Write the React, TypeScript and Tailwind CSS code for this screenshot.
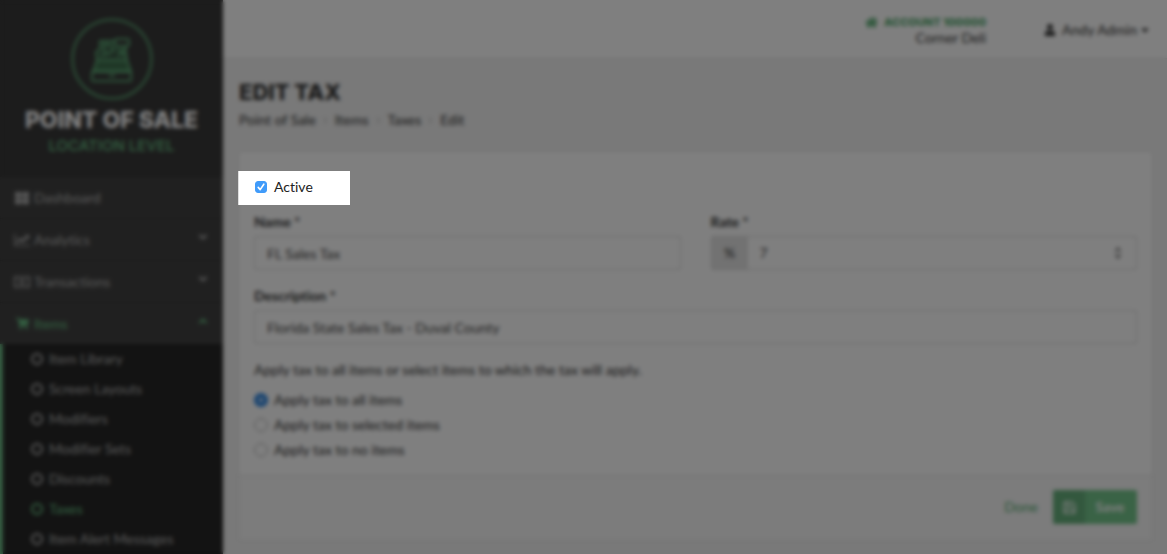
import clsx from 'clsx';
import { ChevronDown, ChevronRight, ChevronUp, Save } from 'lucide-react';
import { useState } from 'react';
import {
  FaCaretDown,
  FaHome,
  FaShoppingCart,
  FaThLarge,
  FaUser,
} from 'react-icons/fa';

const ChartIcon = () => (
  <svg viewBox="0 0 16 14" className="w-4 h-[14px]" fill="none" stroke="currentColor">
    <path d="M.8 1v11.500H16" strokeWidth="1.2" />
    <path d="M3 9.500l3.500-3.500 2.500 2.300L13.500 3.500" strokeWidth="2" />
    <path d="M10.500 2H15v4.500z" fill="currentColor" stroke="none" />
  </svg>
);

const MoneyIcon = () => (
  <svg viewBox="0 0 16 12" className="w-4 h-3" fill="none" stroke="currentColor">
    <rect x=".6" y="1" width="14.800" height="10" strokeWidth="1.200" />
    <ellipse cx="8" cy="6" rx="2.500" ry="3.200" />
    <path d="M1 3.500q2 0 2-2M15 3.500q-2 0-2-2M1 8.500q2 0 2 2M15 8.500q-2 0-2 2" strokeWidth=".7" />
    <path d="M8 4v4" />
  </svg>
);

const CircleIcon = () => (
  <svg viewBox="0 0 14 14" className="w-[14px] h-[14px]" fill="none" stroke="currentColor">
    <circle cx="7" cy="7" r="5" strokeWidth="2" />
  </svg>
);

const NAV_ITEMS = [
  { name: 'Dashboard', icon: <FaThLarge />, expandable: false },
  { name: 'Analytics', icon: <ChartIcon />, expandable: true },
  { name: 'Transactions', icon: <MoneyIcon />, expandable: true },
  { name: 'Items', icon: <FaShoppingCart className="text-[13px]" />, expandable: true, isOpen: true },
];

const SUB_ITEMS = [
  'Item Library',
  'Screen Layouts',
  'Modifiers',
  'Modifier Sets',
  'Discounts',
  'Taxes',
  'Item Alert Messages',
];

const APPLY_OPTIONS = [
  { value: 'all', label: 'Apply tax to all items' },
  { value: 'selected', label: 'Apply tax to selected items' },
  { value: 'none', label: 'Apply tax to no items' },
];

const RegisterLogo = () => (
  <svg
    className="w-[82px] h-[82px]"
    viewBox="0 0 82 82"
    fill="none"
    stroke="#5fae78"
    strokeWidth="2"
    strokeLinejoin="round"
  >
    <circle cx="41" cy="41" r="39.500" />
    <path d="M26 42h30l4 12H22z" fill="#3f6f4e" />
    <rect x="21" y="53" width="39" height="10" rx="2" />
    <path d="M38 57q3 2 6 0" />
    <path d="M26 42l-1-8 4-3v-8h15l3 4h7l2 15z" fill="#3b5544" />
    <rect x="44" y="21" width="14" height="7" rx="2" fill="#383838" />
    <path d="M33 26v7l4 3 6-4-4-5zM47 31l7 7M54 31l-7 7M29 37h6" />
  </svg>
);

const Sidebar = () => (
  <aside className="w-[223px] shrink-0 bg-[#383838] text-[#b4b4b4]">
    <div className="flex flex-col items-center h-[176px] pt-[18px] font-['Inter',sans-serif]">
      <RegisterLogo />
      <div className="mt-[6px] text-[23px] leading-7 font-extrabold text-white">
        POINT OF SALE
      </div>
      <div className="mt-[2px] text-[15px] leading-5 font-medium text-[#68c084]">
        LOCATION LEVEL
      </div>
    </div>
    <nav>
      {NAV_ITEMS.map((item) => (
        <a
          key={item.name}
          href="#"
          className={clsx(
            'flex items-center h-[42px] px-[14px] border-t border-[#363636] bg-[#414141]',
            item.isOpen && 'text-[#68c084]'
          )}
        >
          <span className="w-4 mr-1 flex justify-center">{item.icon}</span>
          <span>{item.name}</span>
          {item.expandable && (
            <span className="ml-auto mb-[6px]">
              {item.isOpen ? (
                <ChevronUp size={12} strokeWidth={4} />
              ) : (
                <ChevronDown size={12} strokeWidth={4} />
              )}
            </span>
          )}
        </a>
      ))}
      <ul className="border-l-3 border-[#6dbd86] bg-[#262626]">
        {SUB_ITEMS.map((name) => (
          <li key={name}>
            <a
              href="#"
              className={clsx(
                'flex items-center gap-[5px] h-[30px] pl-[27px]',
                name === 'Taxes' && 'text-[#68c084]'
              )}
            >
              <CircleIcon />
              {name}
            </a>
          </li>
        ))}
      </ul>
    </nav>
  </aside>
);

const Header = () => (
  <header className="flex justify-end items-center h-[59px] pt-[2px] pr-4 bg-white border-b border-[#e4e4e4]">
    <div className="flex flex-col items-end leading-4">
      <div className="flex items-center gap-[6px] text-[11px] font-extrabold text-[#50a86c] font-['Inter',sans-serif]">
        <FaHome className="text-[13px]" />
        ACCOUNT 100000
      </div>
      <div>Corner Deli</div>
    </div>
    <button type="button" className="flex items-center ml-[58px] gap-[6px]">
      <FaUser className="text-[12px]" />
      <span className="flex items-center gap-[2px]">
        Andy Admin
        <FaCaretDown className="text-[12px]" />
      </span>
    </button>
  </header>
);

const INPUT_CLASS =
  'w-full h-[34px] px-3 bg-white border border-[#d6d6d6] rounded-[2px] text-[#444]';

const TaxForm = () => {
  const [active, setActive] = useState(true);
  const [applyTo, setApplyTo] = useState('all');

  return (
    <form className="mt-[21px] bg-white border border-[#e6e6e6] rounded-[2px]">
      <div className="px-[15px] pt-[19px] pb-[13px]">
        {/* raised above the dimmed backdrop */}
        <label className="relative z-20 flex items-center gap-[7px] w-28 h-[34px] -ml-4 pl-4 pb-[2px] bg-white border-l border-[#ddd] text-[#222]">
          <span className="grid w-3 h-3">
            <input
              type="checkbox"
              checked={active}
              onChange={(e) => setActive(e.target.checked)}
              className="[grid-area:1/1] appearance-none w-3 h-3 rounded-[3px] border border-[#bbb] checked:border-[#409bfa] checked:bg-[#409bfa]"
            />
            {active && (
              <svg
                viewBox="0 0 12 12"
                className="[grid-area:1/1] z-10 w-3 h-3 pointer-events-none"
                fill="none"
                stroke="white"
                strokeWidth="1.6"
                strokeLinecap="round"
                strokeLinejoin="round"
              >
                <path d="M3.200 6.400l2 2.200 3.600-5.400" />
              </svg>
            )}
          </span>
          Active
        </label>

        <div className="mt-[7px] grid grid-cols-2 gap-[30px]">
          <div>
            <label htmlFor="name" className="block mb-1 font-bold">
              Name *
            </label>
            <input id="name" defaultValue="FL Sales Tax" className={INPUT_CLASS} />
          </div>
          <div>
            <label htmlFor="rate" className="block mb-1 font-bold">
              Rate *
            </label>
            <div className="flex items-center h-[34px] border border-[#d6d6d6] rounded-[2px]">
              <span className="flex items-center justify-center w-9 h-full bg-[#e4e4e4]">
                %
              </span>
              <input
                id="rate"
                type="number"
                defaultValue="7"
                className="flex-1 min-w-0 px-3 text-[#444] [appearance:textfield]"
              />
              <svg
                viewBox="0 0 8 14"
                className="w-2 h-[14px] mr-[14px]"
                fill="none"
                stroke="#777"
                strokeWidth="1.8"
              >
                <path d="M1.500 5.500L4 2.300 6.500 5.500M1.500 8.500L4 11.700 6.500 8.500" />
              </svg>
            </div>
          </div>
        </div>

        <label htmlFor="description" className="block mt-4 mb-1 font-bold">
          Description *
        </label>
        <input
          id="description"
          defaultValue="Florida State Sales Tax - Duval County"
          className={INPUT_CLASS}
        />

        <fieldset>
          <legend className="pt-4 pb-[7px]">
            Apply tax to all items or select items to which the tax will apply.
          </legend>
          {APPLY_OPTIONS.map((option) => (
            <label key={option.value} className="flex items-center gap-[6px] h-[25px]">
              <input
                type="radio"
                name="applyTo"
                value={option.value}
                checked={applyTo === option.value}
                onChange={() => setApplyTo(option.value)}
                className="appearance-none w-[14px] h-[14px] rounded-full border border-[#aaa] bg-white checked:border-[5px] checked:border-[#2f86e0]"
              />
              {option.label}
            </label>
          ))}
        </fieldset>
      </div>

      <div className="flex justify-end items-center gap-[15px] px-[15px] pt-[14px] pb-4 bg-[#f8f8f8] border-t border-[#e4e4e4]">
        <a href="#" className="text-[#50a86c]">
          Done
        </a>
        <button
          type="button"
          className="flex items-center h-[34px] rounded-[2px] overflow-hidden bg-[#74c68c] text-white font-bold"
        >
          <span className="flex items-center justify-center w-8 h-full bg-[#66b07c]">
            <Save size={15} strokeWidth={2} />
          </span>
          <span className="w-[52px] pr-[2px]">Save</span>
        </button>
      </div>
    </form>
  );
};

const App = () => (
  <div className="relative flex min-h-screen overflow-hidden bg-[#f2f2f2] font-['Lato',sans-serif] text-[14px] leading-5 text-[#333] [font-variant-ligatures:none]">
    <Sidebar />
    <div className="flex-1 min-w-0">
      <Header />
      <main className="pl-[15px] pr-[14px] pt-[19px] pb-3">
        <h1 className="pl-px text-[22px] leading-7 font-extrabold font-['Inter',sans-serif]">
          EDIT TAX
        </h1>
        <ol className="flex mt-1 pl-px">
          {['Point of Sale', 'Items', 'Taxes', 'Edit'].map((crumb, index) => (
            <li key={crumb} className="flex items-center">
              {index > 0 && <ChevronRight size={9} className="mx-[5px] text-[#888]" />}
              {crumb === 'Edit' ? crumb : <a href="#">{crumb}</a>}
            </li>
          ))}
        </ol>
        <TaxForm />
      </main>
    </div>
    <div className="absolute inset-0 z-10 bg-black/50 backdrop-blur-[2px]" />
  </div>
);

export default App;
